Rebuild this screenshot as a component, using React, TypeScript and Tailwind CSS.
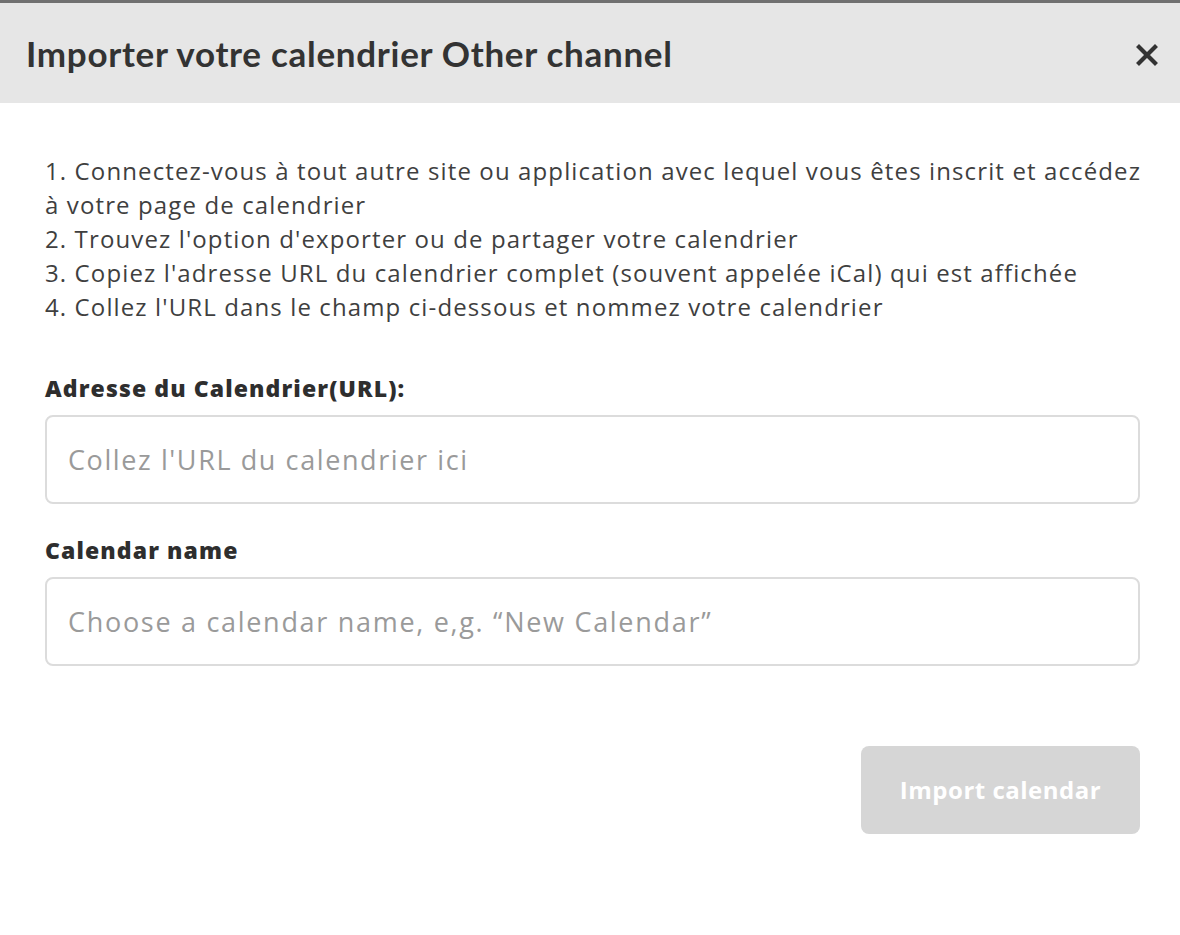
import React from 'react';

const steps = [
  "1. Connectez-vous à tout autre site ou application avec lequel vous êtes inscrit et accédez",
  "à votre page de calendrier",
  "2. Trouvez l'option d'exporter ou de partager votre calendrier",
  "3. Copiez l'adresse URL du calendrier complet (souvent appelée iCal) qui est affichée",
  "4. Collez l'URL dans le champ ci-dessous et nommez votre calendrier",
];

const CloseIcon: React.FC = () => (
  <svg width="22" height="22" viewBox="0 0 22 22" fill="none" stroke="#333333" strokeWidth="4.2" strokeLinecap="square">
    <path d="M3 3L19 19M19 3L3 19" />
  </svg>
);

const App: React.FC = () => {
  return (
    <div className="min-h-[935px] w-[1180px] bg-white font-['Open_Sans',sans-serif] text-[#3a3a3a]">
      <div className="h-[3px] bg-[#707070]" />
      <header className="flex h-[100px] items-center justify-between bg-[#e6e6e6] pl-[26px] pr-[22px]">
        <h2 className="font-['Lato',sans-serif] text-[35px] font-bold tracking-[0.7px] text-[#333333]">
          Importer votre calendrier Other channel
        </h2>
        <button type="button" className="mt-[3px] flex items-center justify-center">
          <CloseIcon />
        </button>
      </header>

      <div className="pl-[45px] pr-[40px] pt-[51px]">
        <div className="text-[24px] leading-[34px] tracking-[1.12px] text-[#3f3f3f]">
          {steps.map((step) => (
            <p key={step} className="whitespace-nowrap">{step}</p>
          ))}
        </div>

        <label className="mt-[47px] block text-[23px] font-extrabold leading-[34px] tracking-[1.1px] text-[#2e2e2e]">
          Adresse du Calendrier(URL):
        </label>
        <input
          type="text"
          placeholder="Collez l'URL du calendrier ici"
          className="mt-[10px] block h-[89px] w-full rounded-[8px] border-2 border-[#dcdcdc] px-[21px] text-[27px] tracking-[1.6px] text-[#333] outline-none placeholder:text-[#9a9a9a]"
        />

        <label className="mt-[29px] block text-[23px] font-extrabold leading-[34px] tracking-[1.1px] text-[#2e2e2e]">
          Calendar name
        </label>
        <input
          type="text"
          placeholder="Choose a calendar name, e,g. “New Calendar”"
          className="mt-[10px] block h-[89px] w-full rounded-[8px] border-2 border-[#dcdcdc] px-[21px] text-[27px] tracking-[1.7px] text-[#333] outline-none placeholder:text-[#9a9a9a]"
        />

        <div className="mt-[80px] flex justify-end">
          <button
            type="button"
            disabled
            className="h-[88px] w-[279px] rounded-[8px] bg-[#d6d6d6] text-[24px] font-bold tracking-[0.5px] text-white"
          >
            Import calendar
          </button>
        </div>
      </div>
    </div>
  );
};

export default App;
